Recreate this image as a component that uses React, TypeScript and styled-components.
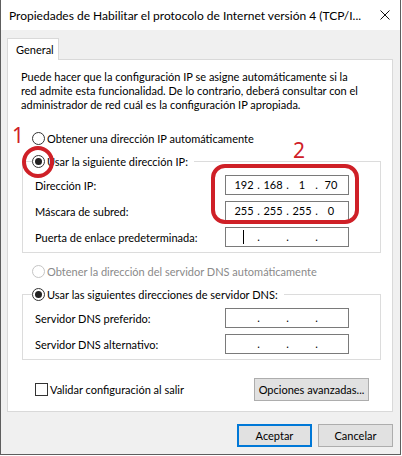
import React from 'react';
import styled, { createGlobalStyle } from 'styled-components';

const GlobalStyle = createGlobalStyle`
  html, body {
    margin: 0;
    padding: 0;
    background: #ffffff;
  }
  body {
    font-family: Lato, "Liberation Sans", sans-serif;
    font-size: 11px;
    color: #000;
  }
`;

//---- data ----//
const ipRows = [
  { label: 'Dirección IP:', octets: ['192', '168', '1', '70'] },
  { label: 'Máscara de subred:', octets: ['255', '255', '255', '0'] },
  { label: 'Puerta de enlace predeterminada:', octets: ['', '', '', ''], caret: true },
];

const dnsRows = [
  { label: 'Servidor DNS preferido:', octets: ['', '', '', ''] },
  { label: 'Servidor DNS alternativo:', octets: ['', '', '', ''] },
];

type Octets = { octets: string[]; caret?: boolean };

const IpField: React.FC<Octets> = ({ octets, caret }) => (
  <IpBox>
    {octets.map((o, i) => (
      <React.Fragment key={i}>
        {i > 0 && <IpDot>.</IpDot>}
        <IpCell>{caret && i === 0 ? <Caret /> : o}</IpCell>
      </React.Fragment>
    ))}
  </IpBox>
);

const Radio: React.FC<{ checked?: boolean; disabled?: boolean; children: React.ReactNode }> = ({
  checked,
  disabled,
  children,
}) => (
  <RadioLabel $disabled={disabled}>
    <RadioCircle $disabled={disabled}>{checked && <RadioDot />}</RadioCircle>
    {children}
  </RadioLabel>
);

const App: React.FC = () => {
  return (
    <>
      <GlobalStyle />
      <Window>
        <TitleBar>
          <TitleText>Propiedades de Habilitar el protocolo de Internet versión 4 (TCP/I...</TitleText>
          <svg width="10" height="10" viewBox="0 0 10 10">
            <path d="M0.5 0.5 L9.5 9.5 M9.5 0.5 L0.5 9.5" stroke="#111" strokeWidth="1" />
          </svg>
        </TitleBar>

        <Body>
          <TabStrip>
            <Tab>General</Tab>
          </TabStrip>
          <Panel>
            <Intro>
              Puede hacer que la configuración IP se asigne automáticamente si la
              <br />
              red admite esta funcionalidad. De lo contrario, deberá consultar con el
              <br />
              administrador de red cuál es la configuración IP apropiada.
            </Intro>

            <OptionRow>
              <Radio>Obtener una dirección IP automáticamente</Radio>
            </OptionRow>

            <Group>
              <Legend>
                <Radio checked>Usar la siguiente dirección IP:</Radio>
              </Legend>
              {ipRows.map((r) => (
                <FieldRow key={r.label}>
                  <span>{r.label}</span>
                  <IpField octets={r.octets} caret={r.caret} />
                </FieldRow>
              ))}
            </Group>

            <OptionRow $gap={11}>
              <Radio disabled>Obtener la dirección del servidor DNS automáticamente</Radio>
            </OptionRow>

            <Group>
              <Legend>
                <Radio checked>Usar las siguientes direcciones de servidor DNS:</Radio>
              </Legend>
              {dnsRows.map((r) => (
                <FieldRow key={r.label}>
                  <span>{r.label}</span>
                  <IpField octets={r.octets} />
                </FieldRow>
              ))}
            </Group>

            <BottomRow>
              <CheckLabel>
                <CheckBox />
                Validar configuración al salir
              </CheckLabel>
              <Button $width={115}>Opciones avanzadas...</Button>
            </BottomRow>
          </Panel>

          <Footer>
            <Button $default>Aceptar</Button>
            <Button>Cancelar</Button>
          </Footer>
        </Body>

        {/* hand-drawn red marks laid over the dialog */}
        <Mark style={{ left: 11, top: 125 }}>1</Mark>
        <Mark style={{ left: 292, top: 140 }}>2</Mark>
        <Overlay width="401" height="455" viewBox="0 0 401 455">
          <circle cx="38" cy="162" r="14" fill="none" stroke="#cf2027" strokeWidth="4" />
          <rect x="213" y="166" width="144" height="56" rx="12" fill="none" stroke="#cf2027" strokeWidth="4" />
        </Overlay>
      </Window>
    </>
  );
};

const Window = styled.div`
  position: relative;
  width: 401px;
  height: 455px;
  box-sizing: border-box;
  border: 1px solid #5e5e5e;
  border-top: none;
  background: #f0f0f0;
  display: flex;
  flex-direction: column;
  overflow: hidden;
`;

const TitleBar = styled.div`
  height: 30px;
  flex: none;
  background: #fff;
  display: flex;
  align-items: center;
  justify-content: space-between;
  padding: 0 10px 0 8px;
  font-size: 12px;
`;

const TitleText = styled.span`
  white-space: nowrap;
  line-height: 15px;
`;

const Body = styled.div`
  display: flex;
  flex-direction: column;
  padding: 8px 7px 0 6px;
`;

const TabStrip = styled.div`
  display: flex;
`;

const Tab = styled.div`
  position: relative;
  z-index: 1;
  width: 52px;
  height: 22px;
  box-sizing: border-box;
  margin-bottom: -1px;
  padding-left: 8px;
  line-height: 21px;
  background: #fff;
  border: 1px solid #d9d9d9;
  border-bottom: none;
`;

const Panel = styled.div`
  display: flex;
  flex-direction: column;
  background: #fff;
  border: 1px solid #d9d9d9;
  padding: 10px 11px 10px 13px;
`;

const Intro = styled.p`
  margin: 0;
  line-height: 14px;
  white-space: nowrap;
`;

const OptionRow = styled.div<{ $gap?: number }>`
  margin-top: ${(p) => p.$gap ?? 19}px;
  padding-left: 11px;
  height: 15px;
  display: flex;
  align-items: center;
`;

const RadioLabel = styled.label<{ $disabled?: boolean }>`
  display: flex;
  align-items: center;
  gap: 2px;
  height: 15px;
  line-height: 15px;
  white-space: nowrap;
  color: ${(p) => (p.$disabled ? '#8a8a8a' : '#000')};
`;

const RadioCircle = styled.span<{ $disabled?: boolean }>`
  width: 13px;
  height: 13px;
  box-sizing: border-box;
  border-radius: 50%;
  border: 1px solid ${(p) => (p.$disabled ? '#c4c4c4' : '#333')};
  background: #fff;
  display: flex;
  align-items: center;
  justify-content: center;
  flex: none;
`;

const RadioDot = styled.span`
  width: 7px;
  height: 7px;
  border-radius: 50%;
  background: #222;
`;

const Group = styled.fieldset`
  margin: 8px 0 0 1px;
  padding: 6px 0 5px 0;
  border: 1px solid #dcdcdc;
  display: flex;
  flex-direction: column;
  gap: 6px;
  min-width: 0;
`;

const Legend = styled.legend`
  margin-left: 9px;
  padding: 0 6px 0 0;
  height: 15px;
`;

const FieldRow = styled.div`
  display: flex;
  justify-content: space-between;
  align-items: center;
  height: 20px;
  padding: 0 31px 0 12px;
  white-space: nowrap;
`;

const IpBox = styled.div`
  width: 124px;
  height: 20px;
  box-sizing: border-box;
  border: 1px solid #7a7a7a;
  background: #fff;
  display: flex;
  align-items: center;
  padding: 0 5px 1px 6px;
`;

const IpCell = styled.span`
  width: 24px;
  text-align: center;
  display: flex;
  justify-content: center;
  align-items: center;
  height: 15px;
`;

const IpDot = styled.span`
  width: 5px;
  text-align: center;
`;

const Caret = styled.span`
  width: 1px;
  height: 14px;
  background: #000;
  margin-right: 2px;
`;

const BottomRow = styled.div`
  margin-top: 18px;
  padding: 0 12px 0 14px;
  display: flex;
  align-items: center;
  justify-content: space-between;
`;

const CheckLabel = styled.label`
  display: flex;
  align-items: center;
  gap: 2px;
  white-space: nowrap;
`;

const CheckBox = styled.span`
  width: 13px;
  height: 13px;
  box-sizing: border-box;
  border: 1px solid #333;
  background: #fff;
`;

const Button = styled.button<{ $default?: boolean; $width?: number }>`
  width: ${(p) => p.$width ?? 75}px;
  height: 23px;
  box-sizing: border-box;
  padding: 0;
  font: inherit;
  color: #000;
  white-space: nowrap;
  background: #e1e1e1;
  border: 1px solid ${(p) => (p.$default ? '#0078d7' : '#adadad')};
  box-shadow: ${(p) => (p.$default ? 'inset 0 0 0 1px #0078d7' : 'none')};
`;

const Footer = styled.div`
  margin-top: 12px;
  display: flex;
  justify-content: flex-end;
  gap: 6px;
`;

const Mark = styled.span`
  position: absolute;
  font-family: "Noto Sans", "Open Sans", sans-serif;
  font-size: 21px;
  line-height: 1;
  color: #cf2027;
`;

const Overlay = styled.svg`
  position: absolute;
  left: -1px;
  top: 0;
  pointer-events: none;
`;

export default App;
